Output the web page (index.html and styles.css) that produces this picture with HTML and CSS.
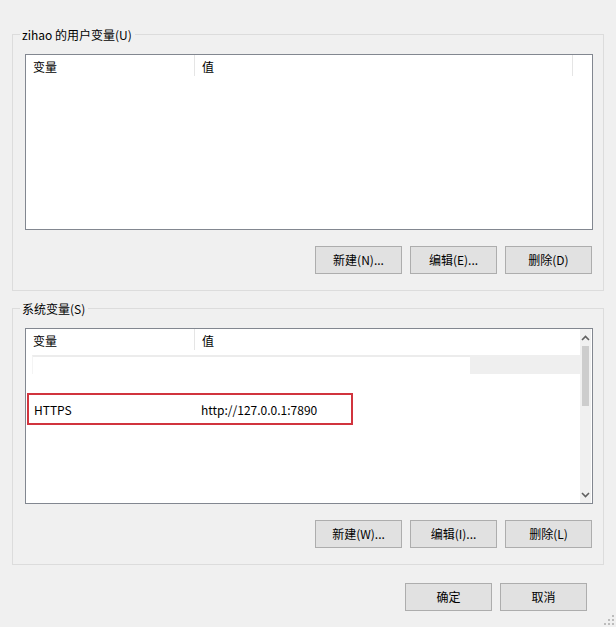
FILE: index.html
```html
<!DOCTYPE html>
<html>
<head>
<meta charset="utf-8">
<link rel="stylesheet" href="styles.css">
</head>
<body>
<div class="dialog">
  <div class="group group-user">
    <div class="legend">zihao 的用户变量(U)</div>
    <div class="list">
      <div class="list-header">
        <div class="col col-name">变量</div>
        <div class="col col-value">值</div>
        <div class="col col-rest"></div>
      </div>
    </div>
    <div class="btn-row">
      <button class="btn">新建(N)...</button>
      <button class="btn">编辑(E)...</button>
      <button class="btn">删除(D)</button>
    </div>
  </div>

  <div class="group group-sys">
    <div class="legend">系统变量(S)</div>
    <div class="list list-sys">
      <div class="list-main">
        <div class="list-header">
          <div class="col col-name">变量</div>
          <div class="col col-value">值</div>
          <div class="col col-rest"></div>
        </div>
        <div class="row-blur">
          <div class="blur-white"></div>
          <div class="blur-gray"></div>
        </div>
        <div class="row-hl">
          <div class="cell-name">HTTPS</div>
          <div class="cell-value">http://127.0.0.1:7890</div>
        </div>
      </div>
      <div class="scrollbar">
        <div class="sb-arrow">
          <svg width="9" height="6" viewBox="0 0 9 6"><path d="M1 5 L4.5 1.5 L8 5" fill="none" stroke="#606060" stroke-width="1.6"/></svg>
        </div>
        <div class="sb-thumb"></div>
        <div class="sb-track"></div>
        <div class="sb-arrow">
          <svg width="9" height="6" viewBox="0 0 9 6"><path d="M1 1 L4.5 4.5 L8 1" fill="none" stroke="#606060" stroke-width="1.6"/></svg>
        </div>
      </div>
    </div>
    <div class="btn-row">
      <button class="btn">新建(W)...</button>
      <button class="btn">编辑(I)...</button>
      <button class="btn">删除(L)</button>
    </div>
  </div>

  <div class="footer">
    <button class="btn">确定</button>
    <button class="btn">取消</button>
  </div>
  <div class="grip">
    <svg width="10" height="10" viewBox="0 0 10 10">
      <rect x="8" y="0" width="2" height="2" fill="#bcbcbc"/>
      <rect x="4" y="4" width="2" height="2" fill="#bcbcbc"/>
      <rect x="8" y="4" width="2" height="2" fill="#bcbcbc"/>
      <rect x="0" y="8" width="2" height="2" fill="#bcbcbc"/>
      <rect x="4" y="8" width="2" height="2" fill="#bcbcbc"/>
      <rect x="8" y="8" width="2" height="2" fill="#bcbcbc"/>
    </svg>
  </div>
</div>
</body>
</html>
```
FILE: styles.css
```css
* { box-sizing: border-box; }
html, body {
  margin: 0;
  padding: 0;
  background: #f0f0f0;
}
body {
  font-family: "Noto Sans CJK SC", "Liberation Sans", sans-serif;
  font-size: 12px;
  color: #000;
  width: 616px;
  height: 627px;
  overflow: hidden;
}
.dialog {
  position: relative;
  display: flex;
  flex-direction: column;
  padding: 34px 0 0 12px;
  height: 627px;
}
.group {
  width: 592px;
  border: 1px solid #dcdcdc;
  display: flex;
  flex-direction: column;
  padding: 0 0 0 12px;
}
.group-sys {
  margin-top: 17px;
}
.legend {
  align-self: flex-start;
  margin: -9px 0 0 -5px;
  padding: 0 3px 0 2px;
  height: 18px;
  line-height: 17px;
  background: #f0f0f0;
}
.list {
  margin-top: 10px;
  width: 568px;
  height: 176px;
  background: #fff;
  border: 1px solid #828790;
}
.list-sys {
  display: flex;
}
.list-main {
  flex: 1;
  display: flex;
  flex-direction: column;
}
.list-header {
  display: flex;
  height: 23px;
}
.col {
  height: 21px;
  line-height: 24px;
  padding-left: 7px;
}
.col-name {
  width: 169px;
  border-right: 1px solid #e5e5e5;
}
.col-value {
  width: 378px;
  border-right: 1px solid #e5e5e5;
}
.col-rest { flex: 1; }
.list-sys .col-value { width: 378px; border-right: none; }

.row-blur {
  display: flex;
  margin: 3px 0 0 6px;
  height: 19px;
}
.blur-white {
  width: 438px;
  border-top: 2px solid #ececec;
  border-left: 1px solid #f4f4f4;
}
.blur-gray {
  flex: 1;
  background: #efefef;
}
.row-hl {
  display: flex;
  align-items: center;
  margin: 19px 0 0 1px;
  width: 326px;
  height: 32px;
  border: 2px solid #d1343e;
}
.cell-name {
  width: 172px;
  padding-left: 5px;
}
.cell-value {
  flex: 1;
}
.scrollbar {
  width: 17px;
  display: flex;
  flex-direction: column;
  background: #f0f0f0;
  margin: 0 1px 0 0;
}
.sb-arrow {
  height: 17px;
  display: flex;
  align-items: center;
  justify-content: center;
}
.sb-thumb {
  height: 60px;
  margin: 0 2px;
  background: #cdcdcd;
}
.sb-track { flex: 1; }

.btn-row {
  display: flex;
  gap: 8px;
  margin: 16px 0 16px 290px;
}
.btn {
  width: 87px;
  height: 28px;
  margin: 0;
  padding: 0;
  border: 1px solid #adadad;
  background: #e1e1e1;
  font-family: "Noto Sans CJK SC", "Liberation Sans", sans-serif;
  font-size: 12px;
  color: #000;
  line-height: 26px;
}
.footer {
  display: flex;
  gap: 8px;
  margin: 18px 0 0 393px;
}
.grip {
  position: absolute;
  right: 2px;
  bottom: 2px;
  line-height: 0;
}
```
